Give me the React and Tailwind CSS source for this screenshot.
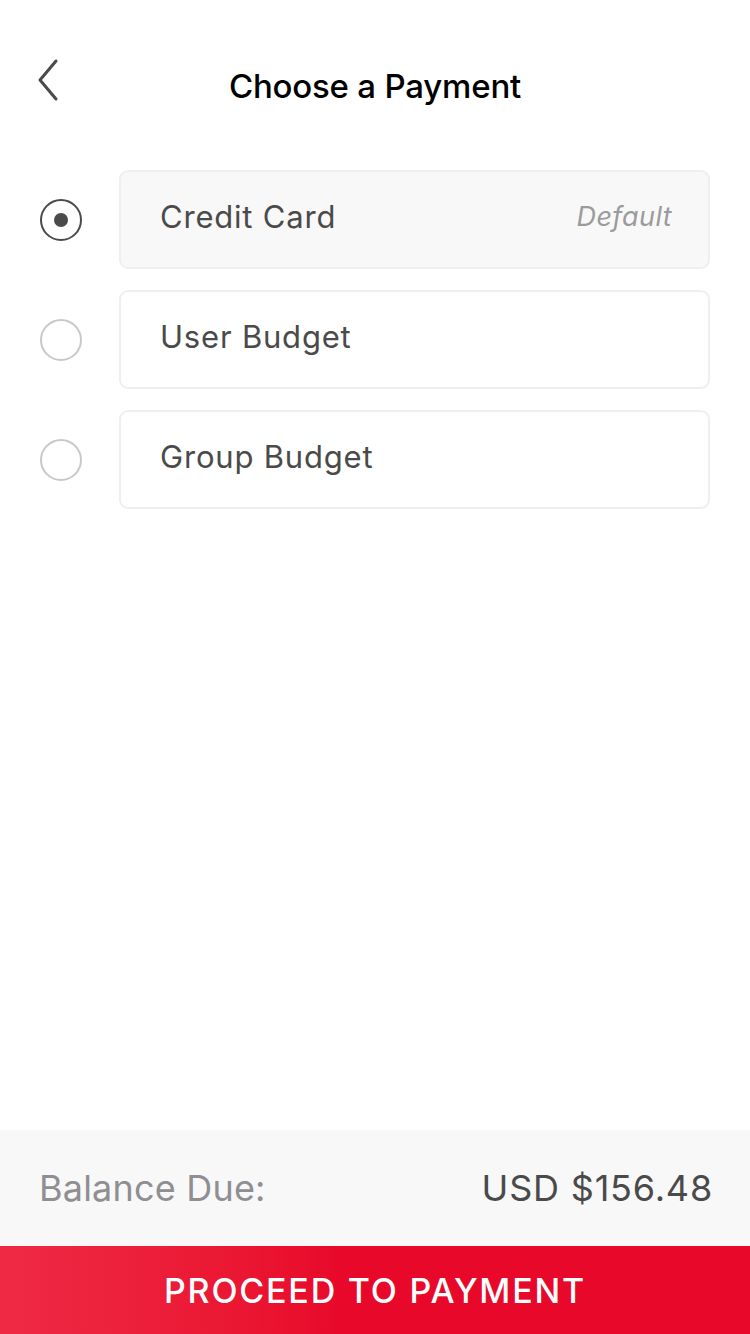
import React, { useState } from 'react'

const options = [
    { id: 'card', label: 'Credit Card', note: 'Default' },
    { id: 'user', label: 'User Budget' },
    { id: 'group', label: 'Group Budget' },
]

const Radio = ({ checked }) => (
    <div className={`w-[42px] h-[42px] rounded-full border-2 flex items-center justify-center shrink-0 ${checked ? 'border-[#4a4a4a]' : 'border-[#c8c8c8]'}`}>
        {checked && <div className="w-[14px] h-[14px] rounded-full bg-[#4a4a4a]" />}
    </div>
)

const App = () => {
    const [selected, setSelected] = useState('card')

    return (
        <div className="h-[1334px] w-[750px] flex flex-col bg-white font-['Inter','Liberation_Sans',sans-serif]">
            <div className="relative h-[170px] pt-[58px] flex justify-center">
                <button className="absolute left-[36px] top-[58px] w-[24px] h-[44px]">
                    <svg width="24" height="44" viewBox="0 0 24 44" fill="none">
                        <path d="M20 3 L4 22 L20 41" stroke="#4a4a4a" strokeWidth="3" strokeLinecap="round" strokeLinejoin="round" />
                    </svg>
                </button>
                <h1 className="text-[33px] leading-[56px] font-medium text-black tracking-[-0.2px]">Choose a Payment</h1>
            </div>

            <div className="flex flex-col gap-[21px] pl-[40px] pr-[40px]">
                {options.map((opt) => {
                    const active = selected === opt.id
                    return (
                        <div key={opt.id} className="flex items-center gap-[37px] cursor-pointer" onClick={() => setSelected(opt.id)}>
                            <Radio checked={active} />
                            <div className={`flex-1 h-[99px] rounded-[9px] border-2 border-[#efefef] flex items-center justify-between pl-[39px] pr-[36px] pb-[5px] ${active ? 'bg-[#f8f8f8]' : 'bg-white'}`}>
                                <span className="text-[31px] text-[#4a4a4a] tracking-[0.8px]">{opt.label}</span>
                                {opt.note && <span className="text-[27px] italic text-[#9b9b9b] tracking-[0.4px]">{opt.note}</span>}
                            </div>
                        </div>
                    )
                })}
            </div>

            <div className="flex-1" />

            <div className="h-[116px] bg-[#f8f8f8] flex items-center justify-between pl-[39px] pr-[37px]">
                <span className="text-[36px] text-[#8e8e93] tracking-[0.2px]">Balance Due:</span>
                <span className="text-[36px] text-[#4a4a4a] tracking-[0.8px]">USD $156.48</span>
            </div>
            <button className="h-[88px] bg-linear-to-r from-[#ef2944] to-[#e8092a] to-[45%] text-white text-[34px] font-medium tracking-[1.8px] flex items-center justify-center">
                PROCEED TO PAYMENT
            </button>
        </div>
    )
}

export default App
